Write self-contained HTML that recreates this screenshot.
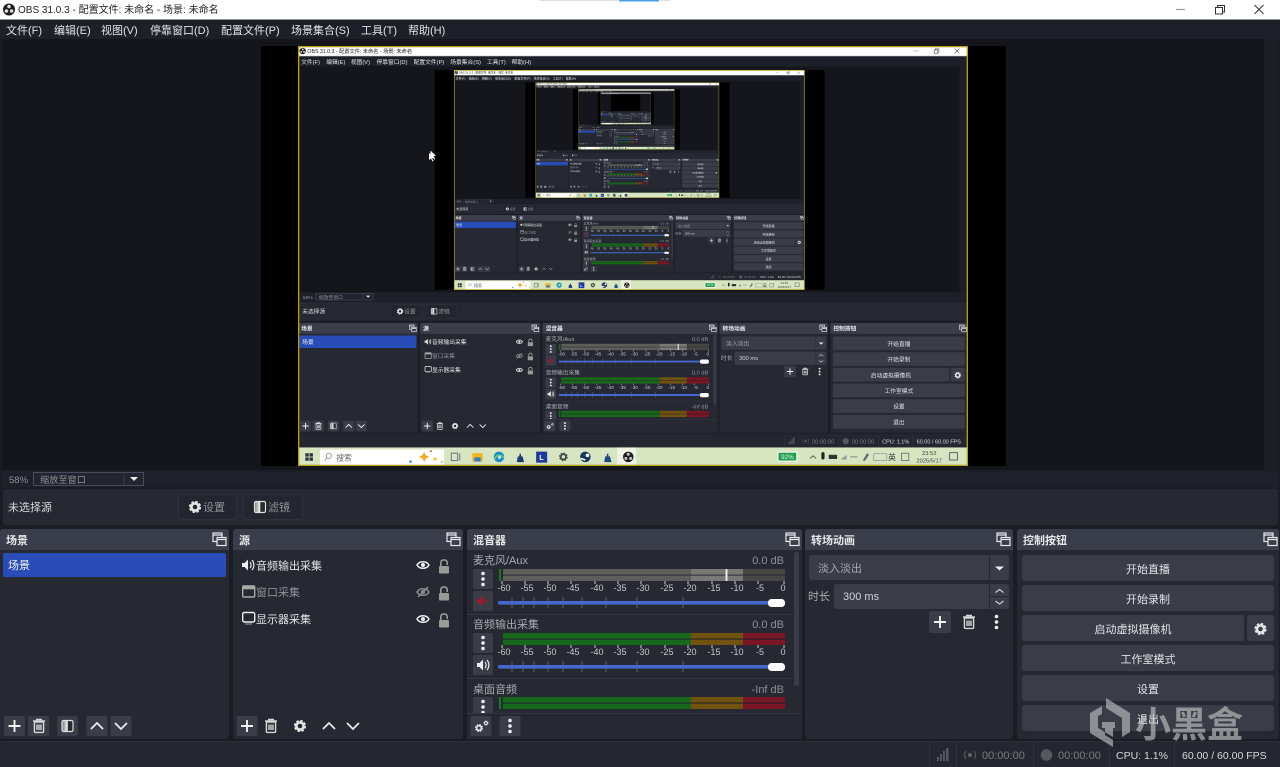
<!DOCTYPE html>
<html lang="zh-CN"><head><meta charset="utf-8"><title>OBS 31.0.3</title>
<style>
html,body{margin:0;padding:0;background:#1b1d24;overflow:hidden;width:1280px;height:767px}
svg{display:block;position:absolute;left:0;top:0;filter:blur(.25px)}
text{font-family:"Liberation Sans","Noto Sans CJK SC",sans-serif;font-size:11px;fill:#e2e3e6}
.b{font-weight:700;fill:#e8e8ea}
.g{fill:#8e9096}
.d{fill:#a8aab0}
.m{text-anchor:middle}
.e{text-anchor:end}
.s{font-size:9px;fill:#c5c7cc;text-anchor:middle}
.st{fill:none;stroke:#e8e8e8;stroke-width:1.7}
</style></head><body>
<svg width="1280" height="767" viewBox="0 0 1280 767" xmlns="http://www.w3.org/2000/svg">
<defs>
<linearGradient id="gr"><stop offset="0" stop-color="#777"/><stop offset=".5" stop-color="#f4f4f4"/><stop offset=".55" stop-color="#2a2c33"/><stop offset="1" stop-color="#2a2c33"/></linearGradient>
<g id="dots"><circle cy="-5.5" r="1.8" fill="#eee"/><circle r="1.8" fill="#eee"/><circle cy="5.5" r="1.8" fill="#eee"/></g>
<path id="plus" d="M-6 0H6M0-6V6" fill="none" stroke="#f0f0f0" stroke-width="1.9"/>
<g id="trash" fill="none" stroke="#d8d8d8" stroke-width="1.4"><path d="M-6-5H6M-3-6.6H3"/><rect x="-4.6" y="-4" width="9.2" height="10.4" rx="1"/><path d="M-2-1.5V4M0-1.5V4M2-1.5V4"/></g>
<g id="filt"><rect x="-5.5" y="-5.5" width="11" height="11" rx="1.5" fill="url(#gr)" stroke="#ddd" stroke-width="1.2"/></g>
<path id="up" d="M-6 3L0-3L6 3" fill="none" stroke="#eee" stroke-width="1.7"/>
<path id="down" d="M-6-3L0 3L6-3" fill="none" stroke="#eee" stroke-width="1.7"/>
<g id="gear"><circle r="3.6" fill="none" stroke="#e4e4e4" stroke-width="2.6"/><circle r="5.2" fill="none" stroke="#e4e4e4" stroke-width="1.8" stroke-dasharray="2.6 1.5"/></g>
<g id="fl" fill="none" stroke="#e8e8e8" stroke-width="1.2"><rect x="0" y="0" width="9" height="8.5"/><rect x="4" y="4.5" width="9" height="8" fill="#3a3d4a"/><path d="M0 2H9M4 6.5H13"/></g>
<g id="eye"><path d="M-6 0C-3.5-4.4 3.5-4.4 6 0C3.5 4.4-3.5 4.4-6 0Z" fill="none" stroke="#f0f0f0" stroke-width="1.5"/><circle r="2" fill="#f0f0f0"/></g>
<g id="lock"><rect x="-5" y="0" width="10" height="7.5" rx="1" fill="#9a9a98"/><path d="M-3.2 0V-3.4C-3.2-7 3.2-7 3.2-3.4V-1" fill="none" stroke="#9a9a98" stroke-width="1.6"/></g>
<g id="spk"><path d="M-6-2H-3.5L0-5.5V5.5L-3.5 2H-6Z" fill="#eee"/><path d="M2-3C3.5-1.5 3.5 1.5 2 3M4-5C6.5-2 6.5 2 4 5" fill="none" stroke="#eee" stroke-width="1.2"/></g>
<g id="mbtn"><rect x="-10" y="-10" width="20" height="20" rx="2" fill="#3a3d48"/></g>
<g id="tb"><rect x="-10.5" y="-10" width="21" height="20" rx="2" fill="#3a3d48"/></g>
<g id="scale">
<text class="s" x="504" y="0">-60</text><text class="s" x="527" y="0">-55</text><text class="s" x="550" y="0">-50</text><text class="s" x="573" y="0">-45</text><text class="s" x="597" y="0">-40</text><text class="s" x="620" y="0">-35</text><text class="s" x="643" y="0">-30</text><text class="s" x="667" y="0">-25</text><text class="s" x="690" y="0">-20</text><text class="s" x="714" y="0">-15</text><text class="s" x="737" y="0">-10</text><text class="s" x="760" y="0">-5</text><text class="s" x="783" y="0">0</text>
</g>
<path id="ticks" d="M502-11v3M525-11v3M548-11v3M571-11v3M595-11v3M618-11v3M641-11v3M665-11v3M688-11v3M712-11v3M735-11v3M758-11v3M784-11v3" stroke="#d0d0d0" stroke-width="1"/>
<g id="slider"><path d="M512-6v11M523-6v11M534-6v11M548-6v11M563-6v11M582-6v11M606-6v11M637-6v11M683-6v11" stroke="#5a5e68" stroke-width="1"/><rect x="498" y="-2" width="280" height="3.6" rx="1.5" fill="#4468cf"/><rect x="768" y="-4" width="17" height="8" rx="3.5" fill="#fff"/></g>
<g id="bar"><rect x="503" y="0" width="188" height="12" fill="#19691d"/><rect x="691" y="0" width="52" height="12" fill="#71520f"/><rect x="743" y="0" width="42" height="12" fill="#7a1526"/><rect x="503" y="5.6" width="282" height="1" fill="#20232a"/></g>

<g id="w">
<rect width="1280" height="767" fill="#1b1d24"/>
<rect width="1280" height="19" fill="#fff"/><rect y="19" width="1280" height="1" fill="#8d8f92"/>
<circle cx="9" cy="9.5" r="6" fill="#1c1c1e"/><circle cx="9" cy="6.5" r="1.8" fill="#ddd"/><circle cx="6.4" cy="11" r="1.8" fill="#ddd"/><circle cx="11.6" cy="11" r="1.8" fill="#ddd"/>
<text x="18" y="13" style="fill:#222;font-size:10px">OBS 31.0.3 - 配置文件: 未命名 - 场景: 未命名</text>
<path d="M1176 9.5h9" stroke="#999" stroke-width="1.2"/>
<g fill="none" stroke="#333" stroke-width="1"><rect x="1215.5" y="7.5" width="7" height="6.5"/><path d="M1217.5 7.5V5.5h7v6.5h-2"/></g>
<path d="M1254.5 5l9 9M1263.5 5l-9 9" stroke="#333" stroke-width="1"/>
<rect y="20" width="1280" height="19" fill="#1d2028"/>
<text x="6" y="34">文件(F)</text><text x="54" y="34">编辑(E)</text><text x="101" y="34">视图(V)</text><text x="150" y="34">停靠窗口(D)</text><text x="221" y="34">配置文件(P)</text><text x="291" y="34">场景集合(S)</text><text x="361" y="34">工具(T)</text><text x="408" y="34">帮助(H)</text>
<rect x="2" y="39" width="1262" height="431" fill="#14161b"/><rect x="1264" y="39" width="12" height="431" fill="#1c1f26"/>
<rect x="261" y="46" width="745" height="420" fill="#000"/>
<rect x="2" y="471" width="1276" height="16" fill="#1e2129"/>
<text class="g" x="9" y="483" style="font-size:9.500px">58%</text>
<rect x="33.500" y="472.500" width="110" height="13" fill="#22252d" stroke="#474b5b"/><path d="M124 472.500v13" stroke="#3a3d4a"/>
<text class="g" x="40" y="483" style="font-size:9.200px">缩放至窗口</text><path d="M130 477h8l-4 4z" fill="#eee"/>
<rect x="3" y="489" width="1275" height="36" rx="3" fill="#262932"/>
<text x="8" y="511" style="fill:#d8d8da">未选择源</text>
<rect x="178.500" y="494.500" width="58" height="25" rx="3" fill="#23262e" stroke="#2f323c"/><rect x="243.500" y="494.500" width="59" height="25" rx="3" fill="#23262e" stroke="#2f323c"/>
<use href="#gear" x="195" y="507"/><text class="g" x="203" y="511">设置</text>
<use href="#filt" x="260" y="507"/><text class="g" x="268" y="511">滤镜</text>

<rect x="0" y="529" width="229" height="210" rx="3" fill="#262932"/><path d="M0 550V532q0-3 3-3H226q3 0 3 3V550Z" fill="#3a3d4a"/>
<rect x="233" y="529" width="230" height="210" rx="3" fill="#262932"/><path d="M233 550V532q0-3 3-3H460q3 0 3 3V550Z" fill="#3a3d4a"/>
<rect x="467" y="529" width="335" height="210" rx="3" fill="#262932"/><path d="M467 550V532q0-3 3-3H799q3 0 3 3V550Z" fill="#3a3d4a"/>
<rect x="805" y="529" width="208" height="210" rx="3" fill="#262932"/><path d="M805 550V532q0-3 3-3H1010q3 0 3 3V550Z" fill="#3a3d4a"/>
<rect x="1017" y="529" width="262" height="210" rx="3" fill="#262932"/><path d="M1017 550V532q0-3 3-3H1276q3 0 3 3V550Z" fill="#3a3d4a"/>
<text class="b" x="6" y="544">场景</text><text class="b" x="239" y="544">源</text><text class="b" x="473" y="544">混音器</text><text class="b" x="811" y="544">转场动画</text><text class="b" x="1023" y="544">控制按钮</text>
<use href="#fl" x="213" y="533"/><use href="#fl" x="447" y="533"/><use href="#fl" x="786" y="533"/><use href="#fl" x="997" y="533"/><use href="#fl" x="1264" y="533"/>

<rect x="3" y="553" width="223" height="24" rx="2" fill="#284cb8"/><text x="8" y="569" style="fill:#f0f0f0">场景</text>
<use href="#tb" x="14.500" y="726"/><use href="#plus" x="14.500" y="726"/>
<use href="#tb" x="38.500" y="726"/><use href="#trash" x="39" y="726"/>
<use href="#tb" x="67.500" y="726"/><use href="#filt" x="67.500" y="726"/>
<use href="#tb" x="97" y="726"/><use href="#up" x="97" y="726"/>
<use href="#tb" x="121" y="726"/><use href="#down" x="121" y="726"/>

<use href="#spk" x="248" y="565"/><text x="256" y="569.500">音频输出采集</text>
<g fill="none" stroke="#aaa" stroke-width="1.4"><rect x="242.700" y="586" width="12" height="11" rx="1"/></g><rect x="243" y="586.300" width="11" height="3" fill="#aaa"/><text class="g" x="256" y="596">窗口采集</text>
<rect x="242.700" y="612.500" width="12" height="9.500" rx="1.500" fill="none" stroke="#eee" stroke-width="1.4"/><path d="M245 624h7" stroke="#999" stroke-width="1"/><text x="256" y="623">显示器采集</text>
<use href="#eye" x="423" y="565"/><use href="#lock" x="444" y="566"/>
<g opacity=".5"><use href="#eye" x="423" y="592"/><path d="M418 597L428 587" stroke="#eee" stroke-width="1.5"/></g><use href="#lock" x="444" y="593"/>
<use href="#eye" x="423" y="619"/><use href="#lock" x="444" y="620"/>
<use href="#tb" x="247" y="726"/><use href="#plus" x="247" y="726"/><use href="#trash" x="271" y="726"/><use href="#gear" x="300" y="726"/><use href="#up" x="329" y="726"/><use href="#down" x="353" y="726"/>

<text class="d" x="473" y="564">麦克风/Aux</text><text class="g e" x="784" y="564">0.0 dB</text>
<use href="#mbtn" x="483" y="579"/><use href="#dots" x="483" y="579"/>
<rect x="499" y="569" width="2" height="12" fill="#1a7a22"/>
<rect x="503" y="569" width="188" height="12" fill="#5d5d5c"/><rect x="691" y="569" width="52" height="12" fill="#787876"/><rect x="743" y="569" width="42" height="12" fill="#464644"/><rect x="503" y="574.600" width="282" height="1" fill="#2a2c30"/><rect x="725.500" y="569" width="2" height="12" fill="#e8e8e8"/>
<use href="#ticks" x="0" y="592"/><use href="#scale" x="0" y="591"/>
<use href="#mbtn" x="483" y="601"/><path d="M477 599H479.500L483 595.500V606.500L479.500 603H477Z" fill="#a5152d"/><path d="M485 599.500l3 3M488 599.500l-3 3" stroke="#a5152d" stroke-width="1"/>
<use href="#slider" x="0" y="603"/>
<rect x="467" y="614" width="326" height="1" fill="#333640"/>
<text class="d" x="473" y="628">音频输出采集</text><text class="g e" x="784" y="628">0.0 dB</text>
<use href="#mbtn" x="483" y="643"/><use href="#dots" x="483" y="643"/><use href="#bar" x="0" y="633"/>
<use href="#ticks" x="0" y="656"/><use href="#scale" x="0" y="655"/>
<use href="#mbtn" x="483" y="665"/><use href="#spk" x="483" y="665"/><use href="#slider" x="0" y="667"/>
<rect x="467" y="678" width="326" height="1" fill="#333640"/>
<text class="d" x="473" y="693">桌面音频</text><text class="g e" x="784" y="693">-Inf dB</text>
<use href="#mbtn" x="483" y="707"/><use href="#dots" x="483" y="707"/>
<rect x="499" y="697" width="2" height="12" fill="#1a7a22"/><use href="#bar" x="0" y="697"/>
<rect x="467" y="713" width="335" height="26" fill="#262932"/><rect x="467" y="713" width="335" height="1" fill="#333640"/>
<rect x="794" y="552" width="5" height="134" rx="2" fill="#3a3d48"/>
<use href="#tb" x="481" y="726"/><g transform="translate(479 728) scale(.65)"><use href="#gear"/></g><g transform="translate(486 723) scale(.4)"><use href="#gear"/></g>
<use href="#tb" x="510" y="726"/><use href="#dots" x="510" y="726"/>

<rect x="809" y="555" width="200" height="25" rx="3" fill="#3a3d48"/><path d="M989.500 555v25" stroke="#262932"/>
<text class="d" x="818" y="572">淡入淡出</text><path d="M995 566.500h9l-4.500 4z" fill="#eee"/>
<text class="d" x="808" y="600">时长</text>
<rect x="834" y="584" width="175" height="25" rx="3" fill="#3a3d48"/><path d="M989.500 584v25M990 596.500h19" stroke="#262932"/>
<text x="843" y="600" style="fill:#d4d5d8">300 ms</text>
<path d="M995.500 592.500l4-3 4 3M995.500 601l4 3 4-3" fill="none" stroke="#ccc" stroke-width="1.2"/>
<rect x="929" y="611" width="22" height="22" rx="2" fill="#3a3d48"/><use href="#plus" x="940" y="622"/><use href="#trash" x="969" y="622"/><use href="#dots" x="996.500" y="622"/>

<g fill="#3a3d48">
<rect x="1022" y="555" width="252" height="26" rx="3"/><rect x="1022" y="585" width="252" height="26" rx="3"/><rect x="1022" y="615" width="222" height="26" rx="3"/><rect x="1247" y="615" width="27" height="26" rx="3"/><rect x="1022" y="645" width="252" height="26" rx="3"/><rect x="1022" y="675" width="252" height="26" rx="3"/><rect x="1022" y="705" width="252" height="26" rx="3"/>
</g>
<text class="m" x="1148" y="573">开始直播</text><text class="m" x="1148" y="603">开始录制</text><text class="m" x="1133" y="633">启动虚拟摄像机</text><use href="#gear" x="1260.500" y="629"/><text class="m" x="1148" y="663">工作室模式</text><text class="m" x="1148" y="693">设置</text><text class="m" x="1148" y="723">退出</text>

<rect y="741" width="1280" height="1" fill="#2c2f38"/><rect y="742" width="1280" height="25" fill="#24272f"/>
<path d="M929.500 742v25M956.500 742v25M1033.500 742v25M1109.500 742v25M1174.500 742v25" stroke="#2f323c"/>
<g fill="#555860"><rect x="937" y="757" width="2" height="4"/><rect x="940" y="754" width="2" height="7"/><rect x="943" y="751" width="2" height="10"/><rect x="946" y="748" width="2.500" height="13"/></g>
<circle cx="970" cy="755" r="2" fill="#666"/><path d="M966 751c-2 2-2 6 0 8M974 751c2 2 2 6 0 8" fill="none" stroke="#555" stroke-width="1.2"/>
<text x="982" y="759" style="font-size:11px;fill:#7a7c82">00:00:00</text>
<circle cx="1046.500" cy="755" r="5.800" fill="#55585f"/><text x="1058" y="759" style="font-size:11px;fill:#7a7c82">00:00:00</text>
<text x="1116" y="759" style="font-size:10.500px;fill:#d8d9dc">CPU: 1.1%</text><text x="1182" y="759" style="font-size:10.500px;fill:#d8d9dc">60.00 / 60.00 FPS</text>
</g>

<g id="f">
<use href="#w"/>
<rect y="767" width="1280" height="35" fill="#d7e5c1"/>
<rect x="42" y="771" width="237" height="31" fill="#fff"/>
<g fill="#334"><rect x="14" y="778" width="6.500" height="6.500"/><rect x="22" y="778" width="6.500" height="6.500"/><rect x="14" y="786" width="6.500" height="6.500"/><rect x="22" y="786" width="6.500" height="6.500"/></g>
<circle cx="59" cy="783" r="5" fill="none" stroke="#888" stroke-width="1.500"/><path d="M55 787l-4 5" stroke="#888" stroke-width="1.500"/>
<text x="73" y="792" style="font-size:15px;fill:#666">搜索</text>
<path d="M241 775l3 7 7 3-7 3-3 7-3-7-7-3 7-3z" fill="#f3a81d"/><circle cx="262" cy="789" r="3" fill="#f3c11d"/><circle cx="215" cy="794" r="2.500" fill="#3b9be0"/><circle cx="254" cy="774" r="2" fill="#e05a3b"/><circle cx="275" cy="795" r="2" fill="#a4d07a"/>
<path d="M293 778h12v14h-12zM309 778v14" fill="none" stroke="#778" stroke-width="2"/>
<rect x="333" y="778" width="20" height="16" fill="#f3b51d"/><rect x="337" y="786" width="12" height="8" fill="#2f7fd0"/>
<circle cx="384" cy="785" r="10" fill="#1b8fc9"/><path d="M376 789c3-10 15-8 16-2" fill="none" stroke="#5fd08a" stroke-width="3"/><circle cx="385" cy="786" r="3" fill="#d7e5c1"/>
<path d="M418 795l2-11h3v-5h3v5h3l3 11z" fill="#1d3a78"/>
<rect x="455" y="775" width="21" height="21" fill="#1c3aa0"/><text x="461" y="791" style="font-size:14px;font-weight:700;fill:#fff">L</text>
<g transform="translate(507 785) scale(1.300)"><circle r="3.800" fill="none" stroke="#444" stroke-width="2.500"/><circle r="5.500" fill="none" stroke="#444" stroke-width="1.800" stroke-dasharray="2.600 1.700"/></g>
<circle cx="549" cy="785" r="10" fill="#17365f"/><circle cx="553" cy="782" r="3.500" fill="#fff"/><path d="M540 788l9 3" stroke="#fff" stroke-width="3"/>
<path d="M585 795l2-11h3v-5h3v5h3l3 11z" fill="#1d4a88"/>
<rect x="610" y="767" width="36" height="35" fill="#eef3e4"/><circle cx="631" cy="785" r="10" fill="#1c1c1e"/><circle cx="631" cy="780" r="3" fill="#bbb"/><circle cx="626.500" cy="788" r="3" fill="#bbb"/><circle cx="635.500" cy="788" r="3" fill="#bbb"/>
<rect x="917" y="776" width="36" height="17" fill="#1fa04e" stroke="#fff" stroke-width="2"/><text x="935" y="789" class="m" style="font-size:12px;fill:#eee">92%</text>
<path d="M978 788l6-5 6 5" fill="none" stroke="#444" stroke-width="1.500"/><rect x="1000" y="776" width="6" height="14" rx="3" fill="#222"/><rect x="1014" y="781" width="16" height="8" fill="#333"/>
<path d="M1037 790l11-9v9z" fill="#999"/><path d="M1055 785h14" stroke="#888" stroke-width="2"/><path d="M1079 792l8-14 4 3-8 12z" fill="#667"/>
<rect x="1100" y="779" width="25" height="13" fill="none" stroke="#889" stroke-width="1.200"/>
<text class="m" x="1135" y="791" style="font-size:15px;fill:#333">英</text>
<rect x="1153" y="778" width="14" height="14" fill="none" stroke="#667" stroke-width="1.500"/>
<text class="m" x="1206" y="781" style="font-size:11px;fill:#444">23:53</text><text class="m" x="1206" y="796" style="font-size:11px;fill:#444">2025/5/17</text>
<rect x="1245" y="777" width="15" height="14" fill="none" stroke="#445" stroke-width="1.500"/>
<rect x="1.250" y="1.250" width="1277.500" height="800" fill="none" stroke="#b8a015" stroke-width="2.500"/>
</g>
</defs>

<use href="#w"/>
<g transform="translate(298 46) scale(.5234)" style="filter:blur(.7px)"><use href="#f"/>
<path d="M253 200l0 14 4-3 3 6 2-1-3-6h5z" fill="#fff"/>
<g transform="translate(298 46) scale(.5234)"><use href="#f"/>
<g transform="translate(298 46) scale(.5234)"><use href="#f"/>
<g transform="translate(298 46) scale(.5234)"><use href="#f"/>
<g transform="translate(298 46) scale(.5234)"><use href="#f"/>
</g></g></g></g></g>
<path d="M429 153l0 7 2-1.500 1.500 3 1-.5-1.500-3h2.500z" fill="#fff"/>
<rect x="540" y="0" width="78" height="1" fill="#ddd"/><rect x="619" y="0" width="40" height="1.500" fill="#4a9fe8"/><rect x="660" y="0" width="10" height="1" fill="#ddd"/>

<g opacity=".62">
<path d="M1106 698L1130 713V732L1122 737V718L1106 708ZM1102 706L1090 713V733L1113 747V737L1098 728V716L1102 714ZM1102 722H1115V728H1113V740L1105 735V728H1102Z" fill="#c4c4c4"/>
<text x="1135" y="737" style="font-size:36px;font-weight:700;fill:#c8c8c8">小黑盒</text>
</g>
</svg>
</body></html>
